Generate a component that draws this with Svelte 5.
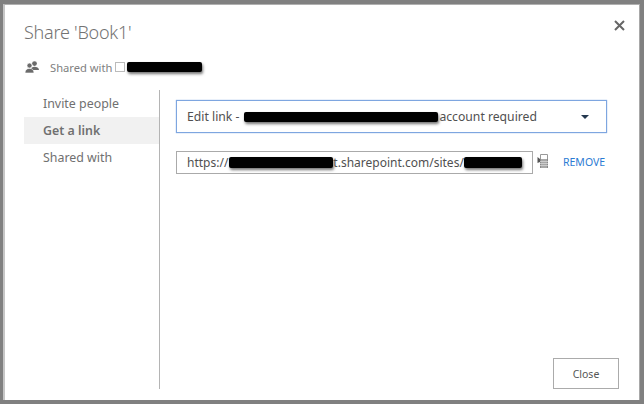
<script>
  const tabs = ['Invite people', 'Get a link', 'Shared with'];
  let active = 'Get a link';
</script>

<style>
  :global(body) {
    margin: 0;
  }

  .frame {
    box-sizing: border-box;
    width: 644px;
    height: 404px;
    padding: 4px 4px 4px 3px;
    background: #808080;
    font-family: "Noto Sans", "Open Sans", sans-serif;
    overflow: hidden;
  }

  .dialog {
    position: relative;
    box-sizing: border-box;
    height: 396px;
    display: flex;
    flex-direction: column;
    padding: 0 0 0 19px;
    background: #fff;
    border-left: 2px solid #c6c6c6;
    border-top: 1px solid #b0b0b0;
    border-right: 1px solid #a8a8a8;
  }

  h1 {
    margin: 12px 0 0;
    font-size: 18px;
    font-weight: 300;
    letter-spacing: -.25px;
    line-height: 30px;
    color: #737373;
  }

  .shared {
    display: flex;
    align-items: center;
    height: 20px;
    margin-top: 10px;
    padding-left: 1px;
    font-size: 11.2px;
    color: #808080;
  }

  .shared svg {
    margin-right: 11px;
    flex: none;
  }

  .avatar {
    box-sizing: border-box;
    width: 10px;
    height: 10px;
    margin-left: 3px;
    border: 1px solid #bbb;
  }

  .redact {
    display: inline-block;
    background: #000;
    border-radius: 2px;
    box-shadow: 1px 2px 3px rgba(0, 0, 0, .55);
  }

  .shared .redact {
    width: 75px;
    height: 10px;
    margin-left: 2px;
  }

  .main {
    display: flex;
    height: 299px;
    margin-top: 13px;
  }

  nav {
    box-sizing: border-box;
    width: 136px;
    flex: none;
    border-right: 1px solid #b4b4b4;
  }

  nav div {
    height: 27px;
    padding-left: 19px;
    font-size: 12.4px;
    line-height: 27px;
    color: #707070;
  }

  nav .active {
    background: #f1f1f1;
    font-weight: 600;
  }

  .pane {
    flex: 1;
    padding: 10px 0 0 16px;
  }

  .select {
    box-sizing: border-box;
    display: flex;
    align-items: center;
    width: 431px;
    height: 33px;
    padding: 0 17px 0 10px;
    border: 1px solid #7ea6e0;
    box-shadow: 0 0 1px #7ea6e0;
    font-size: 12.2px;
    color: #505050;
    white-space: nowrap;
  }

  .select .redact {
    width: 194px;
    height: 10px;
    margin: 0 1px 0 5px;
  }

  .select svg {
    margin-left: auto;
  }

  .link {
    display: flex;
    align-items: center;
    margin-top: 18px;
  }

  .url {
    box-sizing: border-box;
    display: flex;
    align-items: center;
    width: 357px;
    height: 23px;
    padding-left: 10px;
    border: 1px solid #aaa;
    font-size: 12px;
    color: #505050;
    white-space: nowrap;
  }

  .url .redact {
    height: 11px;
  }

  .r1 {
    width: 104px;
    margin: 0 0 0 1px;
  }

  .r2 {
    width: 58px;
    margin-left: 0;
  }

  .copy {
    margin-left: 4px;
    margin-top: -3px;
  }

  .remove {
    margin-left: 15px;
    margin-top: -2px;
    font-size: 10.5px;
    color: #2b7cd3;
  }

  .close {
    position: absolute;
    top: 15px;
    right: 14px;
  }

  button {
    position: absolute;
    right: 20px;
    bottom: 11px;
    box-sizing: border-box;
    width: 66px;
    height: 31px;
    padding: 0;
    border: 1px solid #ababab;
    background: #fff;
    font: inherit;
    font-size: 10.5px;
    color: #555;
  }
</style>

<div class="frame">
  <div class="dialog">
    <h1>Share 'Book1'</h1>
    <div class="shared">
      <svg width="14" height="12" viewBox="0 0 14 12" fill="#6b6b6b">
        <circle cx="9.5" cy="2.6" r="2.4" />
        <path d="M6 9c0-2 1.500-3.200 3.500-3.200S14 7 14 9z" />
        <circle cx="4.500" cy="4.600" r="2.500" stroke="#fff" stroke-width=".6" />
        <path d="M0 12c0-3 1.800-4.600 4.500-4.600S9 9 9 12z" stroke="#fff" stroke-width=".6" />
      </svg>
      <span>Shared with</span>
      <span class="avatar"></span>
      <span class="redact"></span>
    </div>

    <div class="main">
      <nav>
        {#each tabs as tab}
          <div class:active={tab === active}>{tab}</div>
        {/each}
      </nav>

      <div class="pane">
        <div class="select">
          <span>Edit link -</span>
          <span class="redact"></span>
          <span>account required</span>
          <svg width="8" height="4" viewBox="0 0 8 4"><path d="M0 0h8L4 4z" fill="#24384f" /></svg>
        </div>

        <div class="link">
          <div class="url">
            <span>https://</span>
            <span class="redact r1"></span>
            <span>t.sharepoint.com/sites/</span>
            <span class="redact r2"></span>
          </div>
          <svg class="copy" width="11" height="14" viewBox="0 0 11 14">
            <path d="M3.500 5V.5h7V5" fill="none" stroke="#999" />
            <path d="M.5 3l2.500 2v3L.5 9z" fill="#555" />
            <rect x="3" y="5" width="8" height="9" fill="#8a8a8a" />
            <path d="M5 5v9M7 5v9M9 5v9M3 7.500h8M3 9.500h8M3 11.500h8" stroke="#ddd" stroke-width=".7" />
          </svg>
          <span class="remove">REMOVE</span>
        </div>
      </div>
    </div>

    <svg class="close" width="11" height="11" viewBox="0 0 11 11">
      <path d="M1 1l9 9M10 1l-9 9" stroke="#666" stroke-width="2" />
    </svg>
    <button>Close</button>
  </div>
</div>
